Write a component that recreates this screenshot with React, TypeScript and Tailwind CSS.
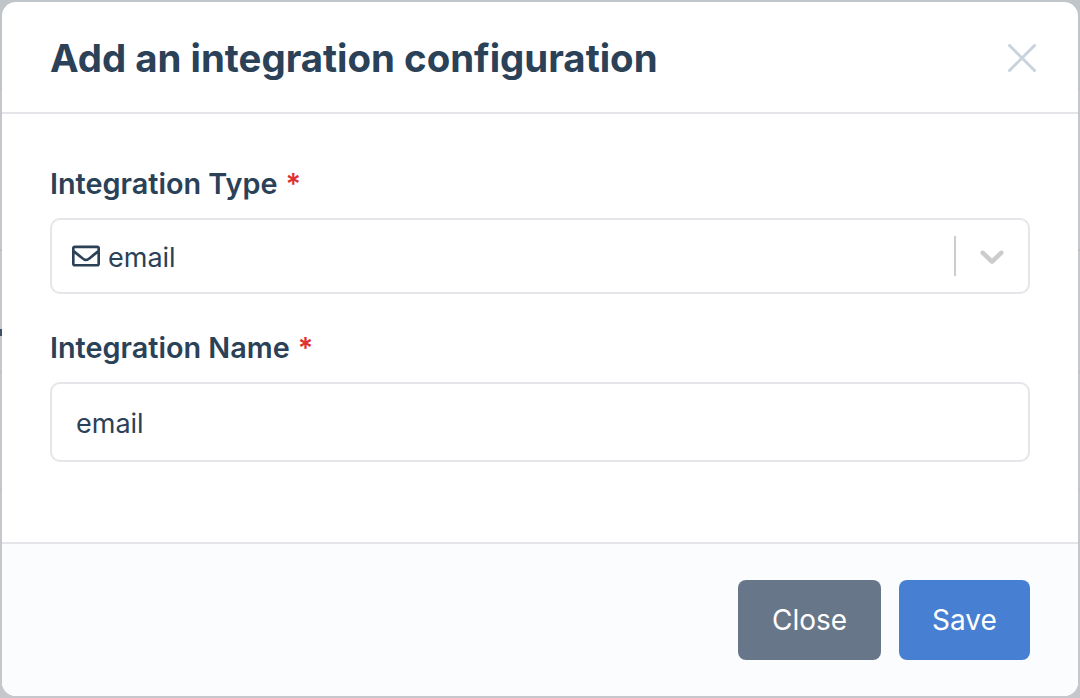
import React from "react";
import { FaRegEnvelope } from "react-icons/fa";

export default function App() {
  return (
    <div className="relative h-[698px] w-[1080px] overflow-hidden bg-[#c5c7cc] p-[2px] font-['Inter',sans-serif] text-[#2a4158]">
      <div className="absolute inset-0 flex flex-col">
        <div className="h-[89px] shrink-0 border-b-2 border-[#bbc0c6] bg-[#c0c5ca]" />
        <div className="h-[162px] shrink-0 border-b-2 border-[#bbc0c6]" />
        <div className="h-[122px] shrink-0 border-b-2 border-[#bfc3c8]" />
        <div className="h-[118px] shrink-0 border-b-2 border-[#bfc3c8]" />
        <div className="h-[118px] shrink-0 border-b-2 border-[#bfc3c8]" />
      </div>
      <div className="absolute left-0 top-[329px] h-[7px] w-[2px] bg-[#3f5064]" />
      <div className="relative flex h-[694px] w-[1076px] flex-col overflow-hidden rounded-[14px] bg-white">
        <header className="flex h-[112px] shrink-0 items-center justify-between border-b-2 border-[#e4e6e9] pl-[48px] pr-[42px]">
          <h1 className="mt-[2px] text-[38.4px] leading-[48px] font-bold">Add an integration configuration</h1>
          <svg width="28" height="28" viewBox="0 0 28 28" className="mt-[2px] text-[#c9d3de]" fill="none" stroke="currentColor" strokeWidth="3" strokeLinecap="round">
            <path d="M1.5 1.5 L26.5 26.5 M26.5 1.5 L1.5 26.5" />
          </svg>
        </header>
        <main className="flex flex-1 flex-col pl-[48px] pr-[48px] pt-[50px]">
          <label className="flex h-[38px] items-center pt-[2px] text-[28.8px] font-semibold">
            Integration Type <span className="ml-[8px] text-[#e03131]">*</span>
          </label>
          <div className="mt-[16px] flex h-[76px] items-center rounded-[10px] border-2 border-[#e4e6e9] pl-[20px]">
            <FaRegEnvelope className="h-[28px] w-[28px]" />
            <span className="ml-[8px] pt-[4px] text-[27px]">email</span>
            <div className="ml-auto flex items-center">
              <div className="h-[40px] w-[2px] bg-[#cccccc]" />
              <svg width="40" height="40" viewBox="0 0 20 20" className="mx-[16px] text-[#cccccc]" fill="currentColor">
                <path d="M4.516 7.548c0.436-0.446 1.043-0.481 1.576 0l3.908 3.747 3.908-3.747c0.533-0.481 1.141-0.446 1.574 0 0.436 0.445 0.408 1.197 0 1.615-0.406 0.418-4.695 4.502-4.695 4.502-0.217 0.223-0.502 0.335-0.787 0.335s-0.57-0.112-0.789-0.335c0 0-4.287-4.084-4.695-4.502s-0.436-1.17 0-1.615z" />
              </svg>
            </div>
          </div>
          <label className="mt-[34px] flex h-[38px] items-center pt-[2px] text-[28.8px] font-semibold">
            Integration Name <span className="ml-[8px] text-[#e03131]">*</span>
          </label>
          <div className="mt-[16px] flex h-[80px] items-center rounded-[10px] border-2 border-[#e4e6e9] pl-[24px] pt-[4px] text-[27px]">
            email
          </div>
        </main>
        <footer className="flex h-[154px] shrink-0 items-start justify-end gap-[18px] border-t-2 border-[#e4e6e9] bg-[#fbfcfe] pr-[48px] pt-[36px]">
          <button className="flex h-[80px] w-[143px] items-center justify-center rounded-[8px] bg-[#68768a] text-[28px] font-normal text-white">Close</button>
          <button className="flex h-[80px] w-[131px] items-center justify-center rounded-[8px] bg-[#477fd2] text-[28px] font-normal text-white">Save</button>
        </footer>
      </div>
    </div>
  );
}
